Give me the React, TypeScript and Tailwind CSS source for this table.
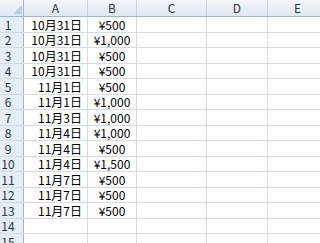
const rows: [string, string][] = [
  ["10月31日", "¥500"],
  ["10月31日", "¥1,000"],
  ["10月31日", "¥500"],
  ["10月31日", "¥500"],
  ["11月1日", "¥500"],
  ["11月1日", "¥1,000"],
  ["11月3日", "¥1,000"],
  ["11月4日", "¥1,000"],
  ["11月4日", "¥500"],
  ["11月4日", "¥1,500"],
  ["11月7日", "¥500"],
  ["11月7日", "¥500"],
  ["11月7日", "¥500"],
  ["", ""],
  ["", ""],
];

const font = { fontFamily: '"Noto Sans CJK JP", "Liberation Sans", sans-serif' };

export default function App() {
  return (
    <div
      className="h-[243px] w-[320px] overflow-hidden bg-white text-[12px] leading-none text-black"
      style={font}
    >
      {/* column headers */}
      <div className="flex h-[17px] border-b border-[#9eb6ce] bg-gradient-to-b from-[#f4f7fb] to-[#dfe7f1] text-[#2b3446]">
        <div className="relative w-[24px] shrink-0 border-r border-[#9eb6ce]">
          <svg className="absolute left-[13px] top-[5px]" width="9" height="9" viewBox="0 0 9 9">
            <path d="M9 0 L9 9 L0 9 Z" fill="#c3cedd" />
          </svg>
        </div>
        {[
          ["A", "w-[64px]"],
          ["B", "w-[49px]"],
          ["C", "w-[70px]"],
          ["D", "w-[61px]"],
          ["E", "w-[60px]"],
        ].map(([l, w]) => (
          <div
            key={l}
            className={`${w} flex shrink-0 items-center justify-center border-r border-[#c5d1de]`}
          >
            {l}
          </div>
        ))}
      </div>

      {rows.map(([a, b], i) => (
        <div
          key={i}
          className={`flex border-b border-[#d6dbe3] ${i % 2 === 0 ? "h-[16px]" : "h-[15px]"}`}
        >
          <div className="flex w-[24px] shrink-0 items-center border-r border-[#9eb6ce] bg-[#e6edf6] text-[#2b3446]">
            <span className="w-[16px] text-center">{i + 1}</span>
          </div>
          <div className="flex w-[64px] shrink-0 items-center justify-end border-r border-[#d6dbe3] pr-[5px]">
            {a}
          </div>
          <div className="flex w-[49px] shrink-0 items-center justify-center border-r border-[#d6dbe3]">
            {b}
          </div>
          <div className="w-[70px] shrink-0 border-r border-[#d6dbe3]" />
          <div className="w-[61px] shrink-0 border-r border-[#d6dbe3]" />
          <div className="w-[60px] shrink-0" />
        </div>
      ))}
    </div>
  );
}
